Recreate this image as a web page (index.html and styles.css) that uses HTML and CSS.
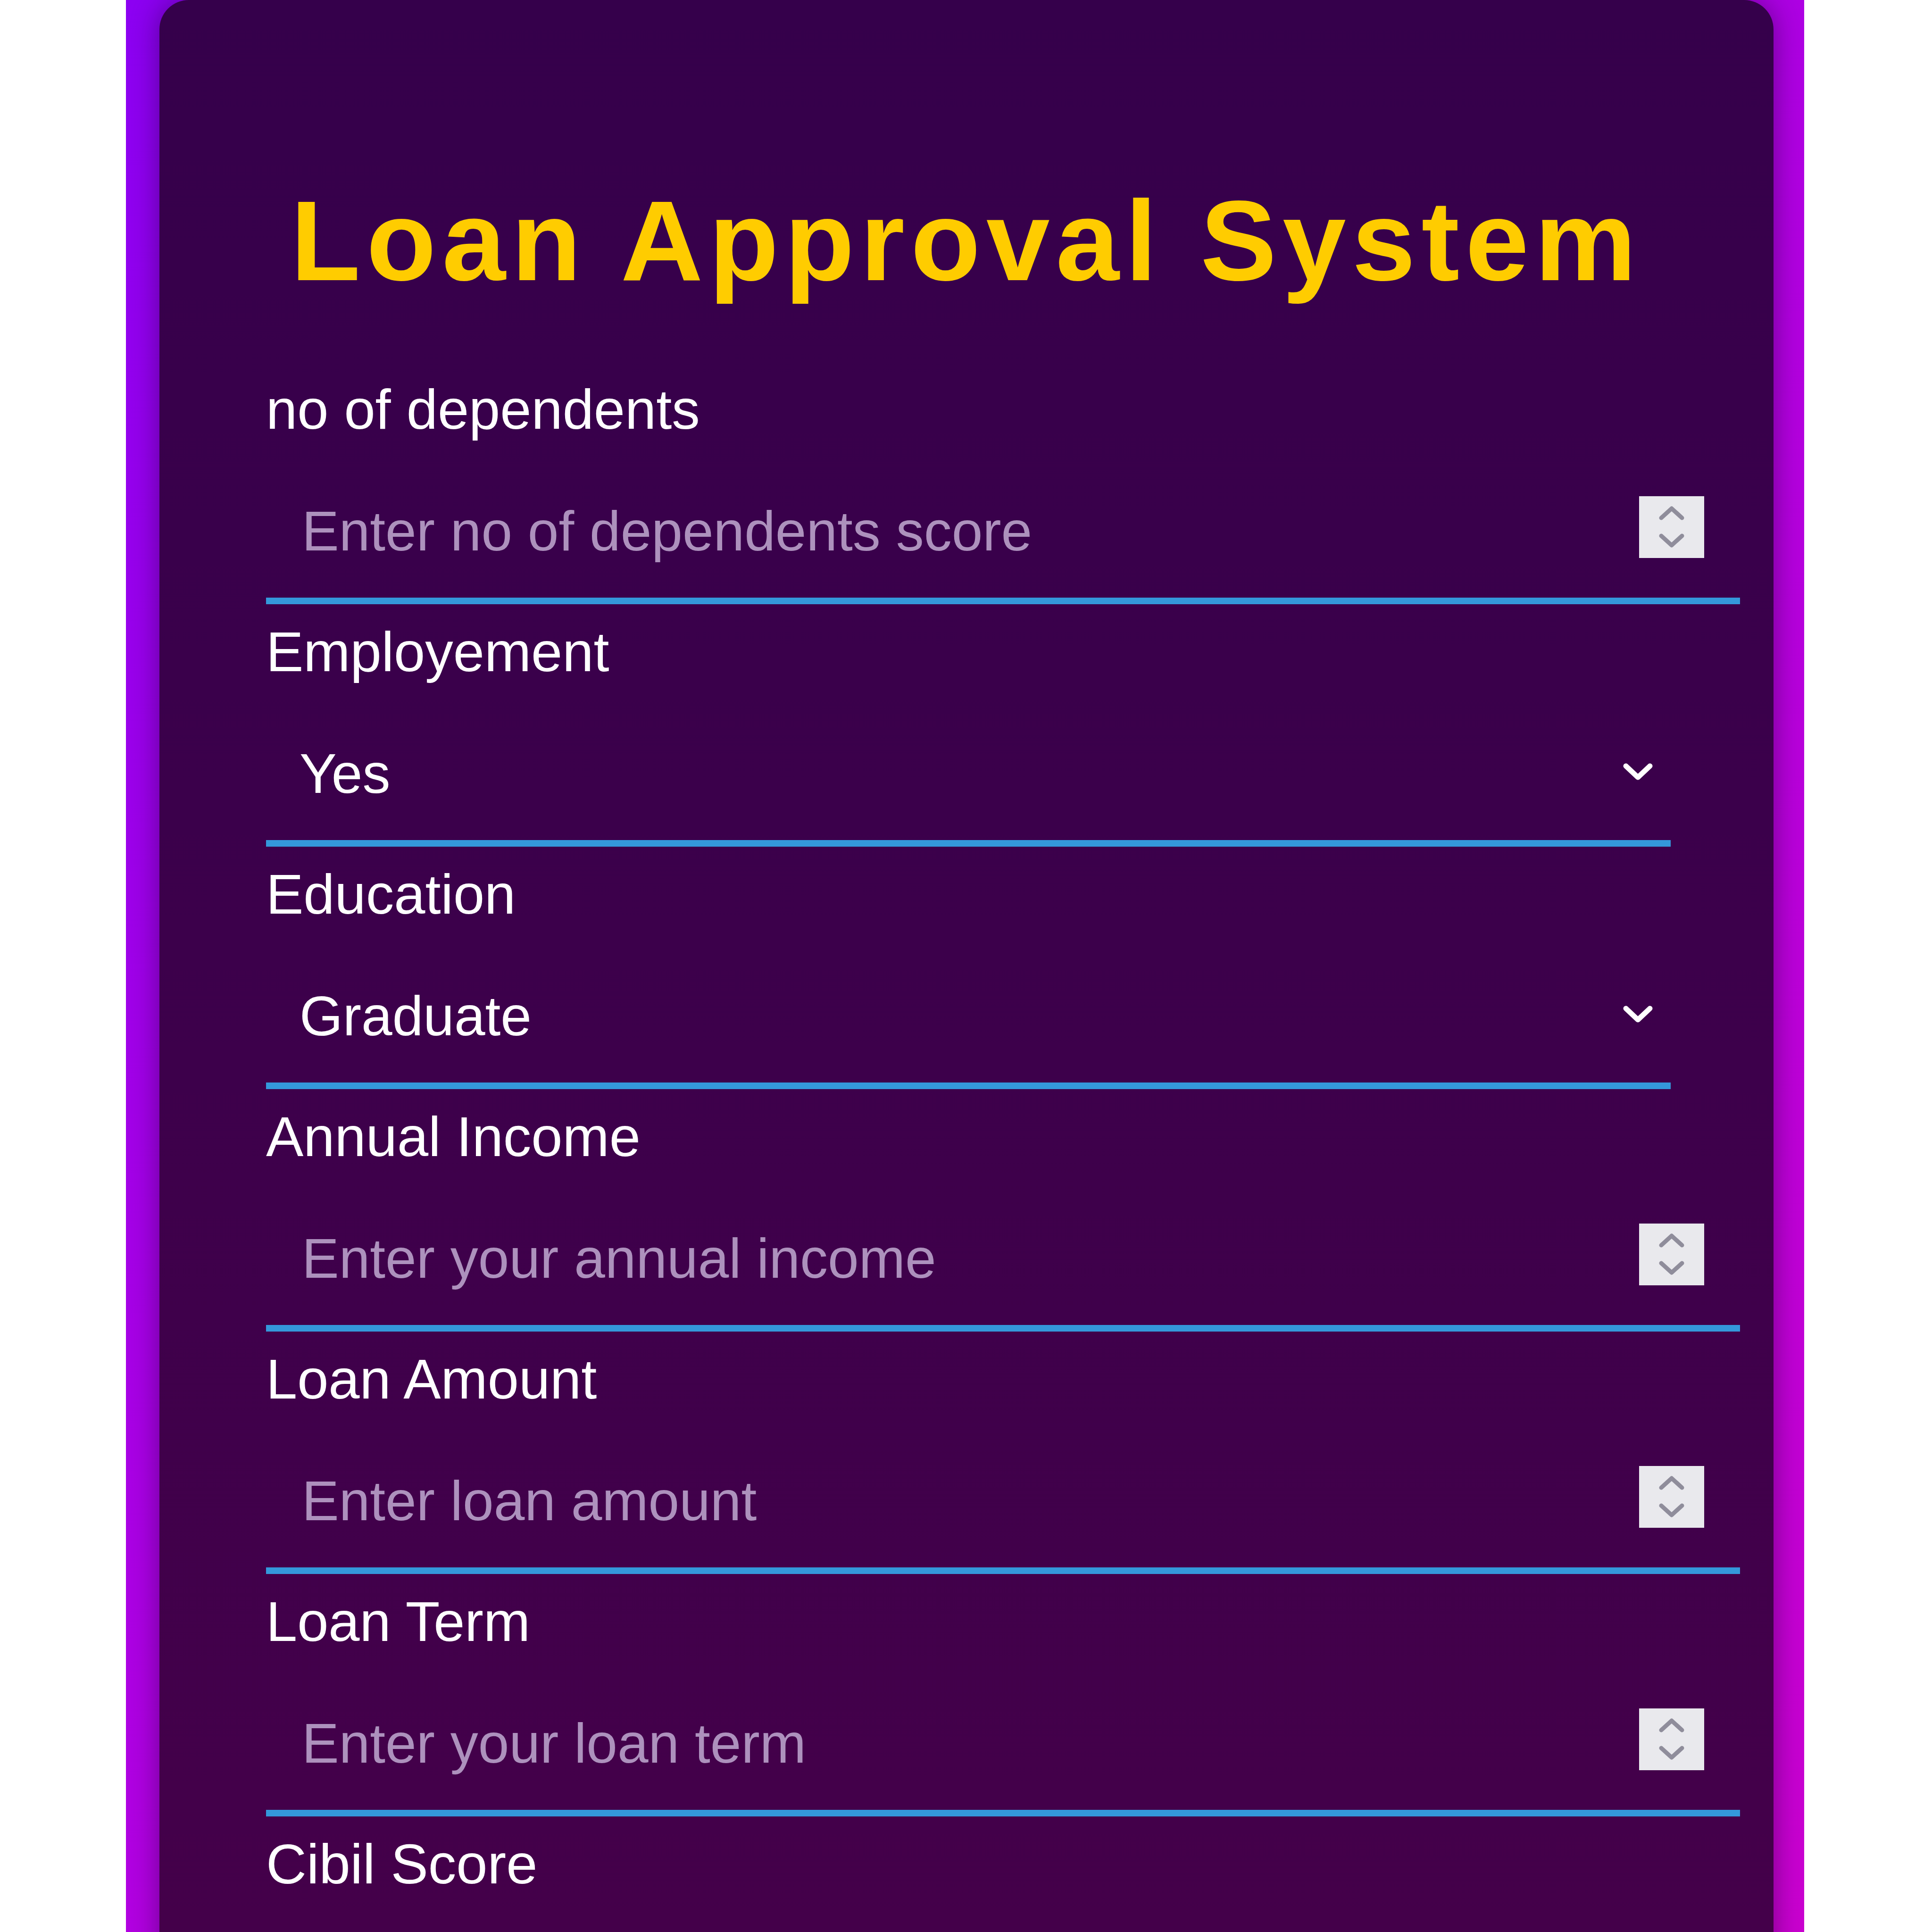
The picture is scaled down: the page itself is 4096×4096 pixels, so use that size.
FILE: index.html
```html
<!DOCTYPE html>
<html lang="en">
<head>
<meta charset="utf-8">
<title>Loan Approval System</title>
<link rel="stylesheet" href="styles.css">
</head>
<body>
<div class="page">
  <div class="card">
    <h1 class="title">Loan Approval System</h1>
    <form class="form">
      <label class="label" for="dep">no of dependents</label>
      <div class="num-box">
        <input class="num" id="dep" type="number" placeholder="Enter no of dependents score">
        <svg class="spin" viewBox="0 0 138 131" aria-hidden="true"><polyline points="47,46 69,26 91,46"/><polyline points="47,84 69,104 91,84"/></svg>
      </div>

      <label class="label" for="emp">Employement</label>
      <div class="sel-box">
        <select class="sel" id="emp"><option>Yes</option><option>No</option></select>
        <svg class="chev" viewBox="0 0 65 38" aria-hidden="true"><polyline points="7,7 32.5,31 58,7"/></svg>
      </div>

      <label class="label" for="edu">Education</label>
      <div class="sel-box">
        <select class="sel" id="edu"><option>Graduate</option><option>Not Graduate</option></select>
        <svg class="chev" viewBox="0 0 65 38" aria-hidden="true"><polyline points="7,7 32.5,31 58,7"/></svg>
      </div>

      <label class="label" for="inc">Annual Income</label>
      <div class="num-box">
        <input class="num" id="inc" type="number" placeholder="Enter your annual income">
        <svg class="spin" viewBox="0 0 138 131" aria-hidden="true"><polyline points="47,46 69,26 91,46"/><polyline points="47,84 69,104 91,84"/></svg>
      </div>

      <label class="label" for="amt">Loan Amount</label>
      <div class="num-box">
        <input class="num" id="amt" type="number" placeholder="Enter loan amount">
        <svg class="spin" viewBox="0 0 138 131" aria-hidden="true"><polyline points="47,46 69,26 91,46"/><polyline points="47,84 69,104 91,84"/></svg>
      </div>

      <label class="label" for="term">Loan Term</label>
      <div class="num-box">
        <input class="num" id="term" type="number" placeholder="Enter your loan term">
        <svg class="spin" viewBox="0 0 138 131" aria-hidden="true"><polyline points="47,46 69,26 91,46"/><polyline points="47,84 69,104 91,84"/></svg>
      </div>

      <label class="label" for="cibil">Cibil Score</label>
      <div class="num-box">
        <input class="num" id="cibil" type="number" placeholder="Enter your cibil score">
        <svg class="spin" viewBox="0 0 138 131" aria-hidden="true"><polyline points="47,46 69,26 91,46"/><polyline points="47,84 69,104 91,84"/></svg>
      </div>
    </form>
  </div>
</div>
</body>
</html>
```

FILE: styles.css
```css
html, body {
  margin: 0;
  padding: 0;
  height: 4096px;
  overflow: hidden;
  background: #ffffff;
  font-family: "Liberation Sans", Arial, sans-serif;
}

.page {
  width: 3558px;
  height: 4096px;
  margin: 0 0 0 267px;
  padding: 0 65px 0 71px;
  box-sizing: border-box;
  background: linear-gradient(135deg, #8c00f2 0%, #b000e2 50%, #ca00d0 100%);
  overflow: hidden;
}

.card {
  width: 3422px;
  min-height: 4600px;
  box-sizing: border-box;
  padding: 371px 218px 0 226px;
  border-radius: 62px 62px 0 0;
  background: linear-gradient(180deg, #35004b 0px, #3c004b 2000px, #44004a 4096px);
  box-shadow: 0 0 60px rgba(20, 0, 40, 0.45);
}

.title {
  margin: 0 0 150px -8px;
  font-size: 242px;
  line-height: 278px;
  font-weight: bold;
  letter-spacing: 12.6px;
  text-align: center;
  color: #ffcc00;
}

.form {
  display: block;
}

.label {
  display: block;
  font-size: 119px;
  line-height: 138px;
  color: #ffffff;
  margin: 0 0 46px 0;
}

.num-box {
  display: flex;
  align-items: flex-start;
  margin: 0 -147px 32px 0;
  padding: 74px 76px 72px 76px;
  border-bottom: 14px solid #3498db;
}

.num {
  flex: 1;
  min-width: 0;
  height: 138px;
  margin: 0;
  padding: 0;
  border: none;
  outline: none;
  background: transparent;
  font-family: "Liberation Sans", Arial, sans-serif;
  font-size: 118px;
  line-height: 138px;
  color: #ffffff;
  -moz-appearance: textfield;
  appearance: textfield;
}

.num::placeholder {
  color: #ad91bd;
  opacity: 1;
}

.num::-webkit-inner-spin-button,
.num::-webkit-outer-spin-button {
  -webkit-appearance: none;
  margin: 0;
}

.spin {
  flex: none;
  width: 138px;
  height: 131px;
  margin-top: -5px;
  background: #e9e9ed;
}

.spin polyline {
  fill: none;
  stroke: #8f8d9b;
  stroke-width: 9;
  stroke-linecap: round;
  stroke-linejoin: round;
}

.sel-box {
  display: flex;
  align-items: center;
  margin: 0 0 32px 0;
  padding: 74px 37px 72px 71px;
  border-bottom: 14px solid #3498db;
}

.sel {
  flex: 1;
  min-width: 0;
  height: 138px;
  margin: 0;
  padding: 0;
  border: none;
  outline: none;
  background: transparent;
  -webkit-appearance: none;
  appearance: none;
  font-family: "Liberation Sans", Arial, sans-serif;
  font-size: 118px;
  line-height: 138px;
  color: #ffffff;
}

.sel option {
  color: #000000;
}

.chev {
  flex: none;
  width: 65px;
  height: 38px;
  margin-top: -8px;
}

.chev polyline {
  fill: none;
  stroke: #ffffff;
  stroke-width: 11;
  stroke-linecap: round;
  stroke-linejoin: round;
}
```
